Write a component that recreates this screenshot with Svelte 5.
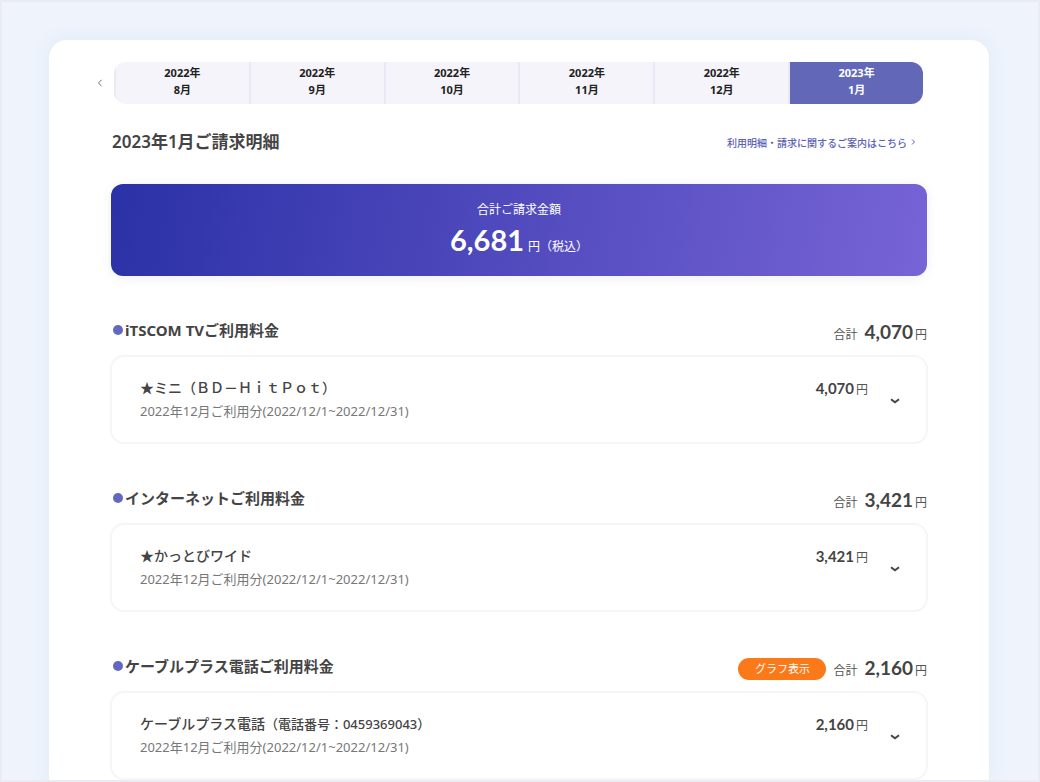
<script>
  const months = [
    { year: '2022年', month: '8月' },
    { year: '2022年', month: '9月' },
    { year: '2022年', month: '10月' },
    { year: '2022年', month: '11月' },
    { year: '2022年', month: '12月' },
    { year: '2023年', month: '1月' }
  ];
  let selected = $state(5);

  const period = '2022年12月ご利用分(2022/12/1~2022/12/31)';
  const sections = [
    { title: 'iTSCOM TVご利用料金', amount: '4,070', item: '★ミニ（ＢＤ－ＨｉｔＰｏｔ）', note: '', graph: false },
    { title: 'インターネットご利用料金', amount: '3,421', item: '★かっとびワイド', note: '', graph: false },
    { title: 'ケーブルプラス電話ご利用料金', amount: '2,160', item: 'ケーブルプラス電話', note: '（電話番号：0459369043）', graph: true }
  ];
</script>

<div class="page">
  <main class="panel">
    <nav class="months" aria-label="請求月">
      <button class="prev" aria-label="前の月">
        <svg viewBox="0 0 6 10" width="6" height="10"><path d="M4.5 1.8 1.5 5l3 3.2" /></svg>
      </button>
      <div class="tabs">
        {#each months as m, i}
          <button class="tab" class:active={i === selected} onclick={() => (selected = i)}>
            <span>{m.year}</span><span>{m.month}</span>
          </button>
        {/each}
      </div>
    </nav>

    <div class="heading">
      <h1>2023年1月ご請求明細</h1>
      <a href="#guide">利用明細・請求に関するご案内はこちら
        <svg viewBox="0 0 5 8" width="5" height="8"><path d="M1 1.5 3.5 4 1 6.5" /></svg>
      </a>
    </div>

    <div class="total">
      <p class="label">合計ご請求金額</p>
      <p class="sum"><strong>6,681</strong><span>円（税込）</span></p>
    </div>

    {#each sections as s}
      <section>
        <header>
          <h2><i class="dot"></i>{s.title}</h2>
          {#if s.graph}<button class="graph">グラフ表示</button>{/if}
          <p class="subtotal"><span>合計</span><strong>{s.amount}</strong><span>円</span></p>
        </header>
        <div class="card">
          <div class="detail">
            <h3>{s.item}<small>{s.note}</small></h3>
            <p>{period}</p>
          </div>
          <p class="price"><strong>{s.amount}</strong><span>円</span></p>
          <button class="toggle" aria-label="詳細を開く">
            <svg viewBox="0 0 10 6" width="10" height="6"><path d="M1 1.2l4 3 4-3" /></svg>
          </button>
        </div>
      </section>
    {/each}
  </main>
</div>

<style>
  :global(body) {
    margin: 0;
    background: #eef3fc;
  }
  .page {
    box-sizing: border-box;
    min-height: 100vh;
    border: 2px solid #ebecf3;
    padding: 38px 49px 0 47px;
    overflow: hidden;
    background: #eef3fc;
    color: #444;
    font-family: 'Noto Sans', 'Noto Sans CJK JP', sans-serif;
  }
  h1, h2, h3, p {
    margin: 0;
  }
  button {
    border: 0;
    padding: 0;
    background: none;
    color: inherit;
    font: inherit;
    cursor: pointer;
  }
  svg {
    fill: none;
    stroke: currentColor;
  }
  .panel {
    padding: 22px 61px 0;
    border-radius: 18px 18px 0 0;
    background: #fff;
    box-shadow: 0 0 18px #dfeaf5;
  }
  .months {
    display: flex;
    align-items: center;
    gap: 8px;
    margin: 0 5px 0 -16px;
  }
  .prev {
    display: flex;
    justify-content: center;
    width: 12px;
    color: #777;
  }
  .tabs {
    display: flex;
    flex: 1;
    overflow: hidden;
    border-radius: 12px;
    background: #f5f4fa;
  }
  .tab {
    display: flex;
    flex: 1;
    flex-direction: column;
    align-items: center;
    height: 42px;
    padding-top: 2px;
    border-left: 2px solid #e9e8f5;
    box-sizing: border-box;
    color: #222;
    font-size: 11px;
    font-weight: 700;
    line-height: 17px;
  }
  .tab.active {
    background: #6268b7;
    color: #fff;
  }
  .heading {
    display: flex;
    align-items: center;
    justify-content: space-between;
    height: 24px;
    margin: 26px 12px 0 2px;
  }
  h1 {
    font-size: 17px;
    font-weight: 600;
    line-height: 24px;
  }
  .heading a {
    display: flex;
    align-items: center;
    gap: 4px;
    color: #5b61b5;
    font-size: 10px;
    font-weight: 500;
    text-decoration: none;
  }
  .total {
    display: flex;
    flex-direction: column;
    align-items: center;
    box-sizing: border-box;
    height: 92px;
    margin: 30px 1px 0;
    padding-top: 17px;
    border-radius: 12px;
    background: linear-gradient(100deg, #2b31a6, #7764d6);
    box-shadow: 0 2px 12px #eee;
    color: #fff;
  }
  .label {
    font-size: 12px;
    line-height: 18px;
  }
  .sum {
    display: flex;
    align-items: baseline;
    gap: 4px;
    font-size: 12px;
    line-height: 42px;
  }
  strong {
    font-family: Lato, sans-serif;
    font-weight: 700;
  }
  .sum strong {
    font-size: 29px;
  }
  section {
    padding-top: 37px;
  }
  header {
    display: flex;
    align-items: center;
    height: 34px;
    margin: 0 1px 8px 3px;
  }
  h2 {
    display: flex;
    align-items: center;
    gap: 2px;
    margin-right: auto;
    font-size: 15px;
    font-weight: 700;
    line-height: 24px;
  }
  .dot {
    width: 10px;
    height: 10px;
    border-radius: 50%;
    background: #6268c0;
  }
  .graph {
    width: 88px;
    height: 22px;
    margin: 6px 7px 0 0;
    border-radius: 11px;
    background: #fb7918;
    color: #fff;
    font-size: 11px;
    line-height: 20px;
  }
  .subtotal,
  .price {
    display: flex;
    align-items: baseline;
    gap: 2px;
    color: #555;
    font-size: 12px;
    line-height: 24px;
  }
  .subtotal {
    padding-top: 6px;
  }
  .subtotal strong {
    margin-left: 5px;
    color: #444;
    font-size: 19px;
  }
  .price strong {
    color: #444;
    font-size: 15px;
  }
  .card {
    display: flex;
    align-items: flex-start;
    box-sizing: border-box;
    height: 89px;
    padding: 19px 26px 0 28px;
    border: 2px solid #f6f6f6;
    border-radius: 14px;
  }
  .detail {
    flex: 1;
  }
  h3 {
    font-size: 14px;
    font-weight: 500;
    line-height: 24px;
  }
  small {
    font-size: 13px;
  }
  .detail p {
    color: #777;
    font-size: 13px;
    line-height: 23px;
  }
  .toggle {
    display: flex;
    margin: 22px 0 0 22px;
  }
  .toggle svg {
    stroke-width: 2;
  }
</style>
